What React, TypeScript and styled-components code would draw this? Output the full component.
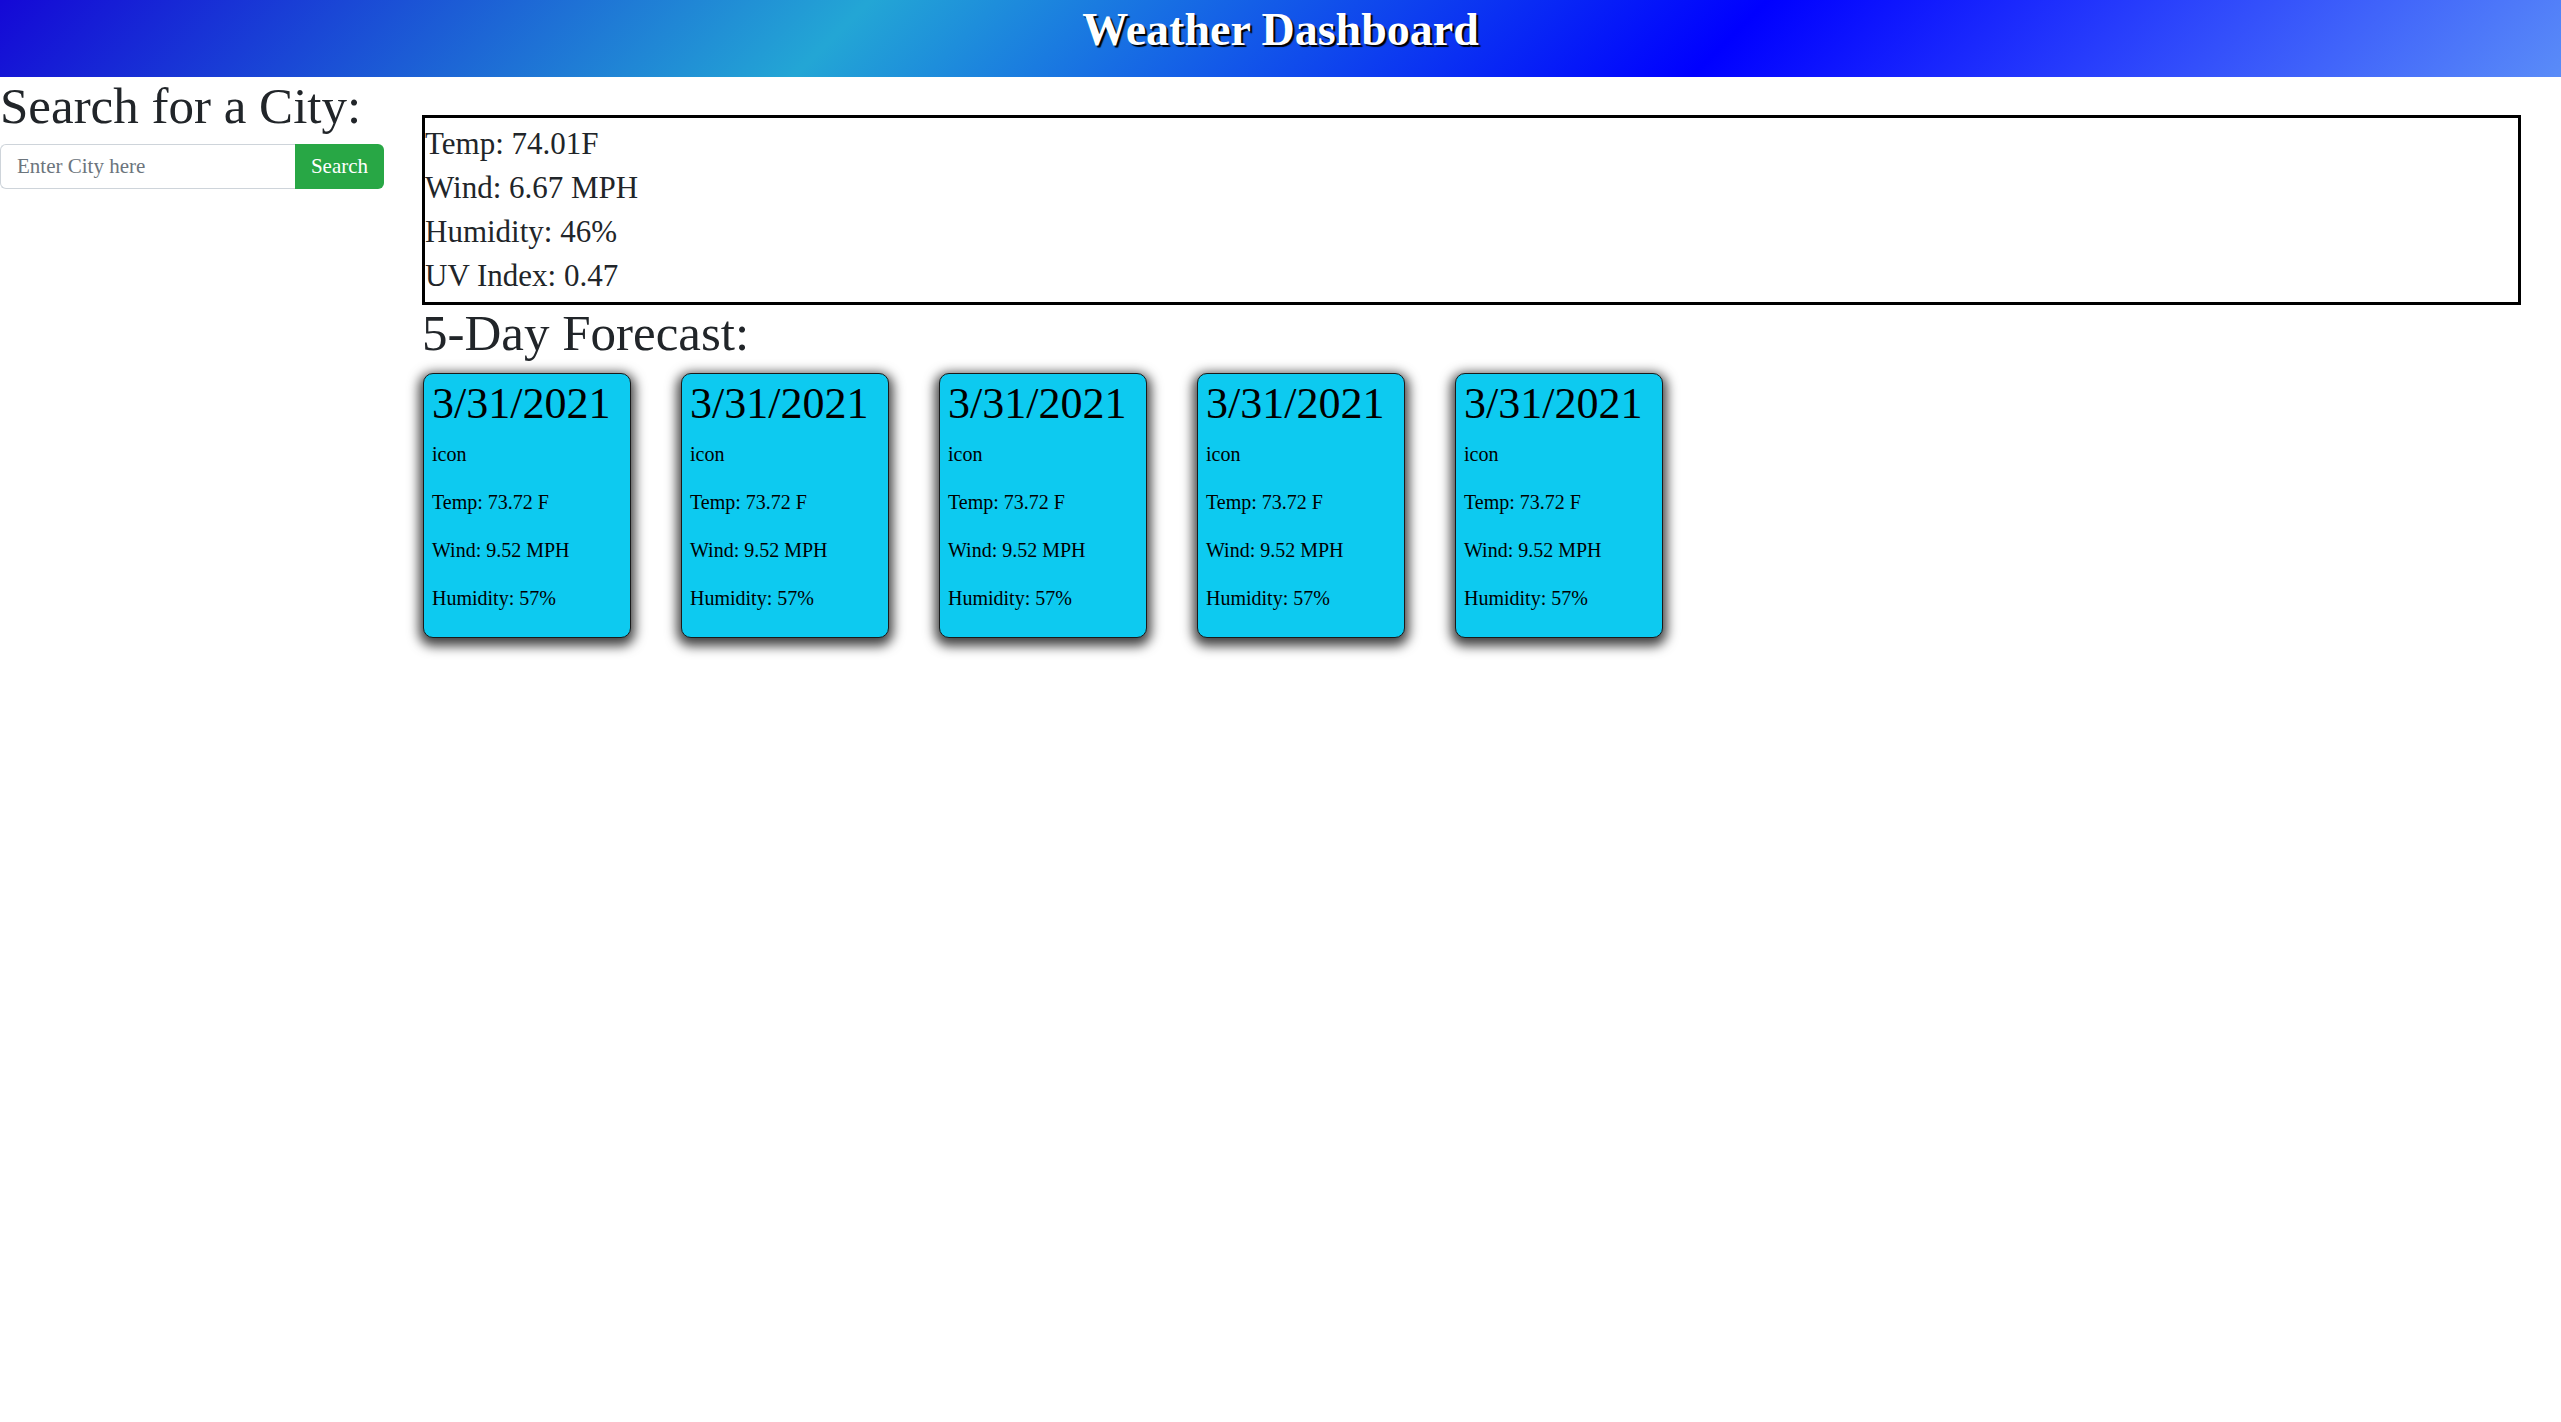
import React, { FC, useState } from "react";
import styled, { createGlobalStyle } from "styled-components";

type Forecast = {
  date: string;
  temp: string;
  wind: string;
  humidity: string;
};

const forecast: Forecast[] = Array.from({ length: 5 }, () => ({
  date: "3/31/2021",
  temp: "73.72",
  wind: "9.52",
  humidity: "57",
}));

const App: FC = () => {
  const [city, setCity] = useState("");

  return (
    <>
      <GlobalStyle />
      <Header>
        <Title>Weather Dashboard</Title>
      </Header>
      <Main>
        <SearchColumn>
          <SearchTitle>Search for a City:</SearchTitle>
          <SearchForm onSubmit={(event) => event.preventDefault()}>
            <CityInput
              placeholder="Enter City here"
              value={city}
              onChange={(event) => setCity(event.target.value)}
            />
            <SearchBtn type="submit">Search</SearchBtn>
          </SearchForm>
        </SearchColumn>
        <WeatherColumn>
          <CurrentBox>
            <CurrentLine>Temp: 74.01F</CurrentLine>
            <CurrentLine>Wind: 6.67 MPH</CurrentLine>
            <CurrentLine>Humidity: 46%</CurrentLine>
            <CurrentLine>UV Index: 0.47</CurrentLine>
          </CurrentBox>
          <ForecastTitle>5-Day Forecast:</ForecastTitle>
          <CardRow>
            {forecast.map((day, i) => (
              <Card key={i}>
                <CardDate>{day.date}</CardDate>
                <CardText>icon</CardText>
                <CardText>Temp: {day.temp} F</CardText>
                <CardText>Wind: {day.wind} MPH</CardText>
                <CardText>Humidity: {day.humidity}%</CardText>
              </Card>
            ))}
          </CardRow>
        </WeatherColumn>
      </Main>
    </>
  );
};

const GlobalStyle = createGlobalStyle`
  * {
    box-sizing: border-box;
  }
  html, body {
    min-height: 100%;
  }
  body {
    margin: 0;
    background: #fff;
    color: #212529;
    font-family: "Liberation Serif", serif;
  }
`;

const Header = styled.header`
  height: 77px;
  padding-top: 7px;
  text-align: center;
  background: linear-gradient(135deg, #1408d6 0%, #23a6d5 33%, #0000ff 67%, #5a8cf8 100%);
`;

const Title = styled.h1`
  margin: 0;
  font-size: 46px;
  line-height: 46px;
  font-weight: 700;
  color: #fff;
  text-shadow: 2px 2px 1px #000;
`;

const Main = styled.main`
  display: grid;
  grid-template-columns: 422px 1fr;
  padding-right: 40px;
  padding-bottom: 60px;
`;

const SearchColumn = styled.section`
  display: flex;
  flex-direction: column;
`;

const SearchTitle = styled.h2`
  margin: 4px 0 0;
  font-size: 51px;
  line-height: 51px;
  font-weight: 400;
`;

const SearchForm = styled.form`
  display: flex;
  width: 384px;
  height: 45px;
  margin-top: 12px;
`;

const CityInput = styled.input`
  width: 295px;
  height: 100%;
  padding: 0 16px;
  border: 1px solid #ced4da;
  border-right: none;
  border-radius: 6px 0 0 6px;
  font-family: "Liberation Serif", serif;
  font-size: 21px;
  color: #212529;
  outline: none;
  &::placeholder {
    color: #6c757d;
  }
`;

const SearchBtn = styled.button`
  flex: 1;
  height: 100%;
  padding: 0;
  border: none;
  border-radius: 0 6px 6px 0;
  background-color: #28a745;
  color: #fff;
  font-family: "Liberation Serif", serif;
  font-size: 21px;
  cursor: pointer;
`;

const WeatherColumn = styled.section`
  padding-top: 38px;
`;

const CurrentBox = styled.div`
  border: 3px solid #000;
  padding: 4px 0 4px;
`;

const CurrentLine = styled.div`
  font-size: 31px;
  line-height: 44px;
`;

const ForecastTitle = styled.h2`
  margin: 3px 0 14px;
  font-size: 51px;
  line-height: 51px;
  font-weight: 400;
`;

const CardRow = styled.div`
  display: flex;
  gap: 50px;
  padding-left: 1px;
`;

const Card = styled.div`
  width: 208px;
  height: 265px;
  padding: 8px 8px 5px;
  border: 1.5px solid #1a1a1a;
  border-radius: 10px;
  background-color: #0dcaf0;
  box-shadow: 0 4px 12px 4px rgba(0, 0, 0, 0.75);
  color: #000;
`;

const CardDate = styled.h3`
  margin: 0 0 16px;
  font-size: 44px;
  line-height: 44px;
  font-weight: 400;
`;

const CardText = styled.p`
  margin: 0 0 24px;
  font-size: 20px;
  line-height: 24px;
`;

export default App;
